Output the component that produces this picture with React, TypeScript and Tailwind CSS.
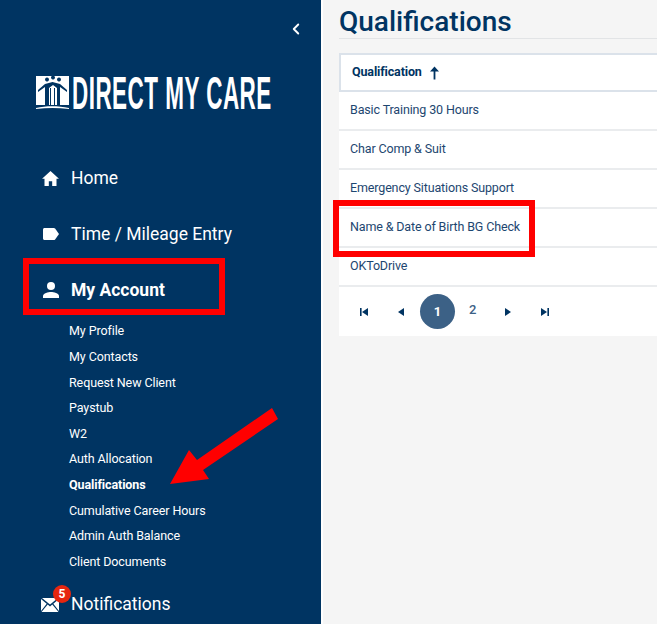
import { ChevronLeft } from "lucide-react";

const subItems = [
  "My Profile",
  "My Contacts",
  "Request New Client",
  "Paystub",
  "W2",
  "Auth Allocation",
  "Qualifications",
  "Cumulative Career Hours",
  "Admin Auth Balance",
  "Client Documents",
];

const rows = [
  "Basic Training 30 Hours",
  "Char Comp & Suit",
  "Emergency Situations Support",
  "Name & Date of Birth BG Check",
  "OKToDrive",
];

const LogoMark = () => (
  <svg width="33" height="34" viewBox="0 0 33 34" className="shrink-0">
    <path fill="#fff" d="M0 0h33v29H0z" />
    <path
      fill="#003462"
      d="M9 3.500a2 2 0 1 1 0 .1zM15 1.500a2 2 0 1 1 0 .1zM21 3.500a2 2 0 1 1 0 .1zM2 14l7-6 7.500-2 7.500 2 7 6v2l-7-5v18h-3V12l-4-3-4 3v17H9V11l-7 5z"
    />
    <path fill="#003462" d="M14 12h1v17h-1zM18 12h1v17h-1z" />
    <path fill="#fff" d="M0 32c10-2.500 22-2.500 33 0v1c-11-1.500-22-1.500-33 0z" />
  </svg>
);

const HomeIcon = () => (
  <svg width="18" height="15" viewBox="0 0 18 16" fill="#fff">
    <path d="M9 0 0 8.200h2.600V16h4.600v-5.200h3.600V16h4.600V8.200H18z" />
  </svg>
);

const TagIcon = () => (
  <svg width="16" height="12" viewBox="0 0 16 12" fill="#fff">
    <path d="M1.500 0h9.300c.5 0 1 .2 1.300.6L16 6l-3.900 5.400c-.3.400-.8.600-1.300.6H1.500C.7 12 0 11.300 0 10.500v-9C0 .7.700 0 1.500 0z" />
  </svg>
);

const PersonIcon = () => (
  <svg width="16" height="16" viewBox="0 0 16 16" fill="#fff">
    <circle cx="8" cy="4" r="4" />
    <path d="M0 16v-2c0-2.700 5.300-4 8-4s8 1.300 8 4v2z" />
  </svg>
);

const MailIcon = () => (
  <svg width="18" height="14" viewBox="0 0 18 14" fill="#fff">
    <path d="M1 0h16L9 6.500z" />
    <path d="M0 1v12l5.700-7.300zM18 1v12l-5.700-7.300zM6.700 6.600 9 8.400l2.300-1.800L17.500 14H.5z" />
  </svg>
);

const PagerIcon = ({ kind }: { kind: "first" | "prev" | "next" | "last" }) => (
  <svg width="8" height="8" viewBox="0 0 8 8" fill="#003462">
    {kind === "first" && <path d="M0 0h1.600v8H0zM8 0v8L2 4z" />}
    {kind === "prev" && <path d="M7 0v8L1 4z" />}
    {kind === "next" && <path d="M1 0v8l6-4z" />}
    {kind === "last" && <path d="M6.400 0H8v8H6.400zM0 0v8l6-4z" />}
  </svg>
);

export default function App() {
  return (
    <div className="relative flex h-[624px] w-[657px] overflow-hidden bg-[#f5f5f5] font-['Roboto',sans-serif]">
      <aside className="flex w-[321px] shrink-0 flex-col bg-[#003462] text-white">
        <div className="flex h-[58px] shrink-0 items-end justify-end pb-[20px] pr-[16px]">
          <ChevronLeft size={18} strokeWidth={2.500} />
        </div>

        <div className="ml-[36px] mt-[18px] flex h-[34px] shrink-0 items-start gap-[3px]">
          <LogoMark />
          <span className="origin-left scale-x-[.478] whitespace-nowrap font-['Liberation_Sans',sans-serif] text-[47px] font-bold leading-[34px] tracking-[1px]">
            DIRECT MY CARE
          </span>
        </div>

        <nav className="mt-[40px] flex flex-col">
          <div className="flex h-[56px] items-center">
            <div className="flex w-[71px] justify-center pl-[42px] pr-[12px]"><HomeIcon /></div>
            <span className="text-[17.500px]">Home</span>
          </div>
          <div className="flex h-[56px] items-center">
            <div className="flex w-[71px] justify-center pl-[42px] pr-[12px]"><TagIcon /></div>
            <span className="text-[17.500px]">Time / Mileage Entry</span>
          </div>
          <div className="flex h-[56px] items-center">
            <div className="flex w-[71px] justify-center pl-[42px] pr-[12px]"><PersonIcon /></div>
            <span className="text-[17.500px] font-bold">My Account</span>
          </div>

          <ul className="ml-[69px] mt-[1px] flex flex-col">
            {subItems.map((item) => (
              <li
                key={item}
                className={`flex h-[25.600px] items-center text-[12.500px] tracking-[-0.1px] ${item === "Qualifications" ? "font-bold" : ""}`}
              >
                {item}
              </li>
            ))}
          </ul>

          <div className="mt-[13px] flex h-[32px] items-center">
            <div className="relative flex w-[71px] justify-center pl-[41px] pr-[12px] pt-[3px]">
              <MailIcon />
              <span className="absolute left-[53px] top-[-10px] flex h-[18px] w-[18px] items-center justify-center rounded-full bg-[#e6260f] text-[12px] font-bold">
                5
              </span>
            </div>
            <span className="text-[17.500px]">Notifications</span>
          </div>
        </nav>
      </aside>

      <main className="min-w-0 flex-1 border-l-2 border-white pl-[16px]">
        <h1 className="flex h-[39px] items-center border-b border-[#e2e4e6] pt-[6px] text-[28px] font-medium leading-[32px] text-[#003462]">
          Qualifications
        </h1>

        <div className="mt-[14px] bg-white text-[12.500px] tracking-[-0.14px] text-[#1d4670]">
          <div className="flex h-[39px] items-center gap-[8px] border-2 border-r-0 border-[#dbe2ea] pl-[11px] font-bold text-[#003462]">
            Qualification
            <svg width="9" height="14" viewBox="0 0 9 13" fill="#003462">
              <path d="M4.500 0 9 5H5.400v8H3.600V5H0z" />
            </svg>
          </div>
          {rows.map((row) => (
            <div key={row} className="flex h-[39px] items-center border-b-2 border-[#eaecee] pl-[11px]">
              {row}
            </div>
          ))}
          <div className="flex h-[49px] items-center text-[13px] text-[#3c6186]">
            <div className="flex w-[50px] justify-center"><PagerIcon kind="first" /></div>
            <div className="flex w-[24px] justify-center"><PagerIcon kind="prev" /></div>
            <div className="ml-[7px] flex h-[35px] w-[35px] items-center justify-center rounded-full bg-[#3c6186] font-bold text-white">1</div>
            <div className="flex w-[35px] justify-center pb-[3px] font-medium">2</div>
            <div className="flex w-[36px] justify-center"><PagerIcon kind="next" /></div>
            <div className="flex w-[37px] justify-center"><PagerIcon kind="last" /></div>
          </div>
        </div>
      </main>

      {/* red annotations drawn over the screenshot */}
      <div className="absolute left-[23px] top-[258px] h-[57px] w-[202px] border-[6px] border-[#ff0000]" />
      <div className="absolute left-[333px] top-[200px] h-[57px] w-[202px] border-[6px] border-[#ff0000]" />
      <svg className="absolute left-[165px] top-[400px]" width="120" height="90" viewBox="0 0 120 90">
        <path fill="#ff0000" d="M5 84 24 50l8 10 75-52 6 11-75 51 6 9z" />
      </svg>
    </div>
  );
}
